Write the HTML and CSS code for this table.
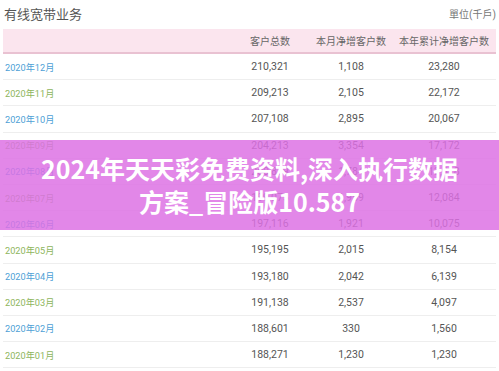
FILE: index.html
```html
<!DOCTYPE html>
<html lang="zh">
<head>
<meta charset="utf-8">
<link rel="stylesheet" href="styles.css">
</head>
<body>
<div class="page">
  <div class="top">
    <div class="title">有线宽带业务</div>
    <div class="unit">單位(千戶)</div>
  </div>
  <div class="table">
    <div class="row head">
      <div class="c0"></div><div class="c">客户总数</div><div class="c">本月净增客户数</div><div class="c">本年累计净增客户数</div>
    </div>
    <div class="row"><div class="c0 blue">2020年12月</div><div class="c">210,321</div><div class="c">1,108</div><div class="c">23,280</div></div>
    <div class="row"><div class="c0 green">2020年11月</div><div class="c">209,213</div><div class="c">2,105</div><div class="c">22,172</div></div>
    <div class="row"><div class="c0 blue">2020年10月</div><div class="c">207,108</div><div class="c">2,895</div><div class="c">20,067</div></div>
    <div class="row"><div class="c0 green">2020年09月</div><div class="c">204,213</div><div class="c">3,354</div><div class="c">17,172</div></div>
    <div class="row"><div class="c0 blue">2020年08月</div><div class="c">200,859</div><div class="c">1,784</div><div class="c">13,818</div></div>
    <div class="row"><div class="c0 green">2020年07月</div><div class="c">199,075</div><div class="c">1,959</div><div class="c">12,084</div></div>
    <div class="row"><div class="c0 blue">2020年06月</div><div class="c">197,116</div><div class="c">1,921</div><div class="c">10,075</div></div>
    <div class="row"><div class="c0 green">2020年05月</div><div class="c">195,195</div><div class="c">2,015</div><div class="c">8,154</div></div>
    <div class="row"><div class="c0 blue">2020年04月</div><div class="c">193,180</div><div class="c">2,042</div><div class="c">6,139</div></div>
    <div class="row"><div class="c0 green">2020年03月</div><div class="c">191,138</div><div class="c">2,537</div><div class="c">4,097</div></div>
    <div class="row"><div class="c0 blue">2020年02月</div><div class="c">188,601</div><div class="c">330</div><div class="c">1,560</div></div>
    <div class="row"><div class="c0 green">2020年01月</div><div class="c">188,271</div><div class="c">1,230</div><div class="c">1,230</div></div>
  </div>
  <div class="banner">
    <div class="banner-text">2024年天天彩免费资料,深入执行数据<br>方案_冒险版10.587</div>
  </div>
</div>
</body>
</html>
```
FILE: styles.css
```css
* { box-sizing: border-box; }
html, body { margin: 0; padding: 0; background: #fff; }
body {
  font-family: Roboto, "Noto Sans CJK SC", sans-serif;
  width: 499px;
  height: 371px;
  overflow: hidden;
}
.page { position: relative; width: 499px; height: 371px; padding: 0 3px; }
.top {
  display: flex;
  justify-content: space-between;
  align-items: center;
  height: 29px;
  padding: 0 0 3px 1px;
}
.title { font-size: 13px; color: #555; }
.unit { font-size: 10px; color: #777; }
.table { display: flex; flex-direction: column; }
.row {
  display: grid;
  grid-template-columns: 227px 80px 82px 1fr;
  height: 26.2px;
  align-items: center;
  border-bottom: 1px solid #eeeeee;
  font-size: 10.5px;
  color: #555;
}
.row.head {
  height: 25px;
  background: #fbe5ee;
  border-bottom: 2px solid #e9c2d2;
  color: #666;
  font-size: 10px;
}
.c { text-align: center; }
.c0 { padding-left: 2px; font-size: 9.2px; }
.blue { color: #4d9fd6; }
.green { color: #8db55c; }
.banner {
  position: absolute;
  left: 0;
  top: 140px;
  width: 499px;
  height: 90px;
  background: rgba(220, 112, 228, 0.84);
  display: flex;
  align-items: center;
  justify-content: center;
}
.banner-text {
  color: #fff;
  font-family: "Noto Sans CJK SC", sans-serif;
  font-weight: 700;
  font-size: 25px;
  line-height: 33px;
  text-align: center;
}
```
